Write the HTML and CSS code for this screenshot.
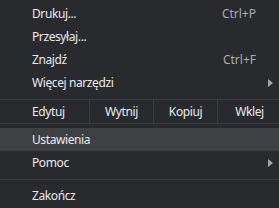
FILE: index.html
```html
<!DOCTYPE html>
<html lang="pl">
<head>
<meta charset="utf-8">
<link rel="stylesheet" href="styles.css">
</head>
<body>
<div class="menu">
  <div class="item"><span class="label">Drukuj...</span><span class="shortcut">Ctrl+P</span><span class="slot"></span></div>
  <div class="item"><span class="label">Przesyłaj...</span><span class="slot"></span></div>
  <div class="item"><span class="label">Znajdź</span><span class="shortcut">Ctrl+F</span><span class="slot"></span></div>
  <div class="item"><span class="label">Więcej narzędzi</span><span class="slot"><span class="arrow"></span></span></div>
  <div class="edit-row">
    <span class="edit-label">Edytuj</span>
    <span class="edit-btn">Wytnij</span>
    <span class="edit-btn">Kopiuj</span>
    <span class="edit-btn">Wklej</span>
  </div>
  <div class="item active"><span class="label">Ustawienia</span><span class="slot"></span></div>
  <div class="item"><span class="label">Pomoc</span><span class="slot"><span class="arrow"></span></span></div>
  <div class="sep"></div>
  <div class="item"><span class="label">Zakończ</span><span class="slot"></span></div>
</div>
</body>
</html>
```

FILE: styles.css
```css
html, body {
  margin: 0;
  padding: 0;
  background: #292a2d;
  overflow: hidden;
}
.menu {
  width: 279px;
  padding-top: 2px;
  font-family: "Noto Sans", "Open Sans", sans-serif;
  font-size: 12px;
  color: #e8eaed;
}
.item {
  display: flex;
  align-items: center;
  height: 23px;
  padding-left: 32px;
}
.item.active {
  background: #3f4043;
}
.label {
  flex: 1;
  white-space: nowrap;
  letter-spacing: -0.4px;
}
.shortcut {
  color: #a9acb1;
}
.slot {
  flex: 0 0 23px;
  display: flex;
  align-items: center;
  padding-left: 12px;
  box-sizing: border-box;
}
.arrow {
  width: 0;
  height: 0;
  border-top: 4px solid transparent;
  border-bottom: 4px solid transparent;
  border-left: 5px solid #a3a5a8;
}
.edit-row {
  display: flex;
  height: 23px;
  margin: 5px 0 4px;
  border-top: 1px solid #3c3d41;
  border-bottom: 1px solid #3c3d41;
  width: 281px;
  letter-spacing: -0.4px;
}
.edit-label {
  flex: 0 0 89px;
  box-sizing: border-box;
  padding-left: 32px;
  display: flex;
  align-items: center;
}
.edit-btn {
  flex: 0 0 64px;
  box-sizing: border-box;
  border-left: 1px solid #3c3d41;
  display: flex;
  align-items: center;
  justify-content: center;
}
.sep {
  height: 1px;
  margin: 5px 0 4px;
  background: #3c3d41;
}
```
